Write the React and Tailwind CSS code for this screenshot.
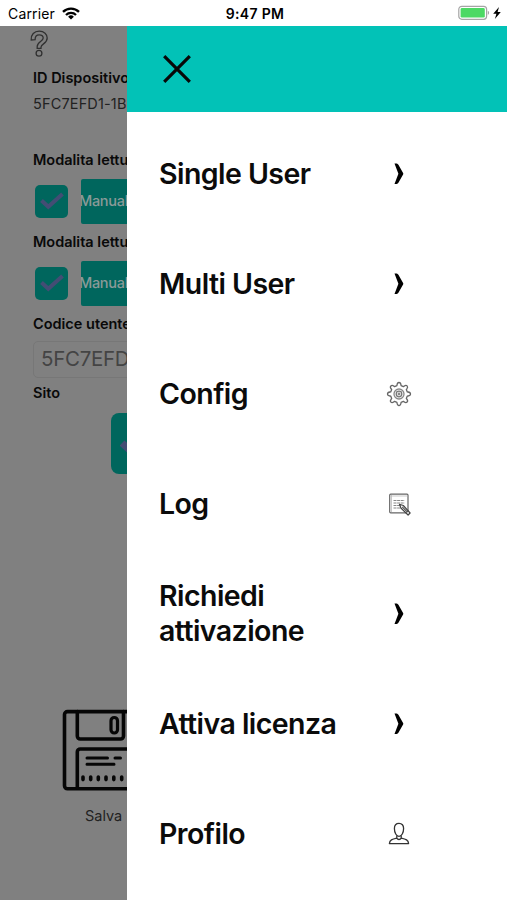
import React from 'react';

const WifiIcon = () => (
  <svg width="18" height="13" viewBox="0 0 18 13" className="ml-[7px] shrink-0" fill="none" stroke="#000" strokeWidth="2.3">
    <path d="M1 4.9a11.3 11.3 0 0 1 16 0" />
    <path d="M4 8a7.1 7.1 0 0 1 10 0" />
    <path d="M9 12.6L6.1 9.7a4.1 4.1 0 0 1 5.8 0z" fill="#000" stroke="none" />
  </svg>
);

const BatteryIcon = () => (
  <svg width="44" height="16" viewBox="0 0 44 16" className="shrink-0">
    <rect x="0.8" y="1.3" width="27.8" height="13" rx="3" fill="#fff" stroke="#a5a5a5" strokeWidth="1.2" />
    <rect x="2.6" y="3" width="24.2" height="9.6" rx="1.4" fill="#4cd964" />
    <path d="M29.8 5.7c1.8.6 1.8 3.6 0 4.2z" fill="#a5a5a5" />
    <path d="M41 1.9l-5.8 6.8h3.2l-1.5 5.4 5.9-7.2h-3.2z" fill="#000" />
  </svg>
);

const QuestionIcon = () => (
  <svg width="20" height="28" viewBox="0 0 20 28" className="shrink-0" fill="none" stroke="#303030" strokeWidth="1.3">
    <path d="M1.2 10C.8 4.5 4.3 1.2 9.2 1.2c5 0 8 3 8 6.800 0 5.600-6.200 5.800-6.200 9.200v1.200H7.200v-2c0-4.600 6-5 6-8.300 0-2-1.400-3.300-4-3.300-2.900 0-4.100 1.700-4.100 4.800z" />
    <circle cx="9" cy="23.3" r="2.9" />
  </svg>
);

const CheckBox = () => (
  <div className="w-[33px] h-[33px] rounded-[5px] bg-[#00665d] flex items-center justify-center shrink-0">
    <svg width="24" height="18" viewBox="0 0 24 18" fill="none" stroke="#434d74" strokeWidth="4">
      <path d="M1.500 8.500l6.800 6.200L22.500 2" />
    </svg>
  </div>
);

const FloppyIcon = () => (
  <svg width="84" height="84" viewBox="0 0 84 84" className="shrink-0" fill="none" stroke="#060606" strokeWidth="3.6" strokeLinecap="round" strokeLinejoin="round">
    <path d="M5.500 2.600h64l12 12v65.200h-76a3 3 0 0 1-3-3V5.600a3 3 0 0 1 3-3z" />
    <path d="M15.300 2.600v24.400a3 3 0 0 0 3 3H58.500a3 3 0 0 0 3-3V2.600" />
    <rect x="49" y="8.500" width="6.500" height="15.500" rx="3.200" strokeWidth="3.200" />
    <path d="M15.300 79V43a3 3 0 0 1 3-3h64" />
    <path d="M25 48.900h20.500M53 48.900h5.500M25 55.300h27" strokeWidth="3" />
    <path d="M21 68v2.600M28.700 68v2.600M36.300 68v2.600M44 68v2.600M51.800 68v2.600M59.700 68v2.600" strokeWidth="3.600" />
  </svg>
);

const ChevronIcon = () => (
  <svg width="26" height="26" viewBox="0 0 26 26">
    <path d="M8.500 2.600c1.400-.4 3.100-.3 3.900 1.100l4.700 8.200c.3.600.3 1.100 0 1.700l-4.700 8.200c-.8 1.400-2.500 1.500-3.900 1.100l3.900-10.200z" fill="#000" />
  </svg>
);

const GearIcon = () => (
  <svg width="26" height="26" viewBox="0 0 26 26" fill="none" stroke="#666" strokeWidth="1.3" strokeLinejoin="round">
    <path d="M10.900 4.700C11.200 2.700 11.100 1.500 13 1.500s1.800 1.200 2.100 3.200l2.300 1c1.600-1.200 2.400-2.200 3.700-.8s.4 2.100-.8 3.700l1 2.300c2 .3 3.200.2 3.200 2.100s-1.200 1.800-3.200 2.100l-1 2.300c1.200 1.600 2.200 2.400.8 3.700s-2.100.4-3.700-.8l-2.300 1c-.3 2-.2 3.200-2.100 3.200s-1.800-1.200-2.100-3.200l-2.300-1c-1.600 1.200-2.400 2.200-3.700.8s-.4-2.100.8-3.700l-1-2.300c-2-.3-3.200-.2-3.200-2.100s1.200-1.800 3.200-2.100l1-2.300c-1.200-1.600-2.200-2.400-.8-3.700s2.100-.4 3.700.8z" />
    <circle cx="13" cy="13" r="5" stroke="#888" />
    <circle cx="13" cy="13" r="2.800" stroke="#777" />
    <circle cx="13" cy="13" r="0.800" stroke="#888" />
  </svg>
);

const LogIcon = () => (
  <svg width="26" height="26" viewBox="0 0 26 26" fill="none" stroke="#666" strokeWidth="1.2">
    <rect x="3.7" y="3.2" width="18.3" height="18.6" rx="1" />
    <path d="M4.500 5h17M5.500 4v17" stroke="#bbb" strokeWidth="0.8" />
    <path d="M7.500 9.500h11M7.500 12h11M7.500 14.500h9M7.500 17h8" stroke="#888" strokeDasharray="3 .6" />
    <path d="M13.500 13.300l3.800 1.200 6.800 7.500-2 2-7.200-7z" fill="#fff" stroke="#444" strokeLinejoin="round" />
    <path d="M16.200 15.800l5.200 5.400M20.300 21.600l2.300-2.100" stroke="#555" />
  </svg>
);

const ProfileIcon = () => (
  <svg width="26" height="26" viewBox="0 0 26 26" fill="none" stroke="#333" strokeWidth="1.3" strokeLinejoin="round">
    <path d="M13 2.300c-3 0-4.600 2.100-4.600 5.300 0 4.200 2 7.700 4.600 7.700s4.600-3.500 4.600-7.700c0-3.200-1.600-5.300-4.600-5.300z" />
    <path d="M10.800 14.500v2.700c-4.600 1-7.200 1.800-7.400 5.400h19.200c-.2-3.600-2.800-4.400-7.400-5.400v-2.700M10.800 17.200c1 1.700 3.400 1.700 4.400 0" />
  </svg>
);

const menuItems = [
  { label: 'Single User', icon: ChevronIcon },
  { label: 'Multi User', icon: ChevronIcon },
  { label: 'Config', icon: GearIcon },
  { label: 'Log', icon: LogIcon },
  { label: 'Richiedi attivazione', icon: ChevronIcon },
  { label: 'Attiva licenza', icon: ChevronIcon },
  { label: 'Profilo', icon: ProfileIcon },
];

const StatusBar = () => (
  <header className="h-[25.5px] shrink-0 flex items-center pl-[8px] pr-[5px] pt-[1px] text-black bg-white">
    <div className="flex-1 flex items-center text-[14px] tracking-[0.15px]">
      Carrier <WifiIcon />
    </div>
    <div className="text-[14px] font-semibold tracking-[0.3px]">9:47 PM</div>
    <div className="flex-1 flex justify-end">
      <BatteryIcon />
    </div>
  </header>
);

const ReadingMode = () => (
  <>
    <h3 className="h-[20px] leading-[20px] font-semibold">Modalita lettura</h3>
    <div className="h-[45px] mt-[9px] mb-[8px] pl-[2px] flex items-center">
      <CheckBox />
      <div className="ml-[13px] w-[160px] h-full shrink-0 rounded-[2px] bg-[#00665d] flex items-center overflow-hidden text-[#8a9a98] font-medium">
        <span className="-ml-[2px] tracking-[-0.3px]">Manuale</span>
      </div>
    </div>
  </>
);

const SettingsPage = () => (
  <section className="w-[127px] shrink-0 overflow-hidden bg-[#808080] text-[#090909] text-[14.5px] whitespace-nowrap">
    <div className="w-[340px] pl-[33px] pt-[4px] flex flex-col">
      <div className="-ml-[3px] h-[28px]"><QuestionIcon /></div>
      <h3 className="mt-[10px] h-[20px] leading-[20px] font-semibold">ID Dispositivo</h3>
      <p className="mt-[6px] mb-[36px] h-[20px] leading-[20px] text-[#222] tracking-[0.15px]">5FC7EFD1-1B</p>
      <ReadingMode />
      <ReadingMode />
      <h3 className="h-[20px] leading-[20px] font-semibold">Codice utente</h3>
      <div className="mt-[7px] h-[37px] pl-[7px] rounded-[5px] border border-[#777] flex items-center text-[20.5px] text-[#444] tracking-[-0.3px]">5FC7EFD1</div>
      <h3 className="mt-[5.5px] h-[20px] leading-[20px] font-semibold">Sito</h3>
      <div className="ml-[78px] mt-[10px] w-[160px] h-[61px] rounded-[8px] bg-[#00665d] flex items-center">
        <svg width="46" height="36" viewBox="0 0 46 36" className="ml-[9px]" fill="none" stroke="#434d74" strokeWidth="7">
          <path d="M2 17l13 12L43 4" />
        </svg>
      </div>
      <div className="mt-[235px] ml-[29px]"><FloppyIcon /></div>
      <p className="ml-[52px] mt-[13px] h-[20px] leading-[20px] text-[#222]">Salva</p>
    </div>
  </section>
);

const MenuRow = ({ label, icon: Icon }) => (
  <li className="h-[110px] flex items-center">
    <span className="w-[227px] pr-[24px] text-[28.5px] leading-[35px] font-semibold tracking-[-0.55px]">{label}</span>
    <div className="pt-[2px]"><Icon /></div>
  </li>
);

const Drawer = () => (
  <aside className="flex-1 bg-white text-[#0b0b0b]">
    <div className="h-[86px] pl-[36px] flex items-center bg-[#02c2b7]">
      <svg width="28" height="28" viewBox="0 0 28 28" stroke="#080808" strokeWidth="3.2">
        <path d="M1.2 1.2l25.6 25.6M26.8 1.2L1.2 26.8" />
      </svg>
    </div>
    <ul className="pt-[6.9px] pl-[32px]">
      {menuItems.map((item) => (
        <MenuRow key={item.label} label={item.label} icon={item.icon} />
      ))}
    </ul>
  </aside>
);

const App = () => (
  <div className="w-[507px] h-[900px] overflow-hidden flex flex-col bg-white font-['Inter',sans-serif]">
    <StatusBar />
    <main className="flex-1 min-h-0 flex">
      <SettingsPage />
      <Drawer />
    </main>
  </div>
);

export default App;
